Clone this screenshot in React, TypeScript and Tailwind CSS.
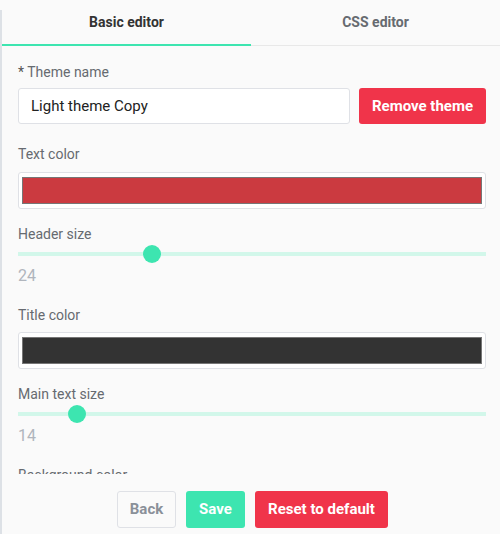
import React from "react";

const font = { fontFamily: "Roboto, 'Liberation Sans', sans-serif" };

function Label({ children, className = "" }: { children: React.ReactNode; className?: string }) {
  return <div className={"text-[14px] leading-[20px] text-[#666a70] " + className}>{children}</div>;
}

function ColorBox({ color, className = "" }: { color: string; className?: string }) {
  return (
    <div className={"h-[37px] rounded-[3px] border border-[#dfe1e6] bg-white pl-[3px] pr-[3px] pt-[4px] pb-[4px] " + className}>
      <div className="h-full border border-[#767676]" style={{ backgroundColor: color }} />
    </div>
  );
}

function Slider({ pos }: { pos: number }) {
  return (
    <div className="relative h-[20px] flex items-center">
      <div className="h-[4px] w-full bg-[#d2f7ea]" />
      <div
        className="absolute top-[1px] h-[18px] w-[18px] rounded-full bg-[#3de5b0]"
        style={{ left: pos - 9 }}
      />
    </div>
  );
}

export default function App() {
  return (
    <div className="w-[500px] h-[534px] bg-[#fafafa] flex overflow-hidden" style={font}>
      <div className="mt-[10px] w-[2px] bg-[#dde1e6] shrink-0" />
      <div className="flex-1 flex flex-col min-w-0">
        <div className="relative h-[46px] flex border-b border-[#e8e8e8] shrink-0">
          <div className="relative flex-1 flex items-center justify-center text-[14px] font-bold text-[#333]">
            Basic editor
            <div className="absolute left-0 right-0 bottom-[-1px] h-[2px] bg-[#3de5b0]" />
          </div>
          <div className="flex-1 flex items-center justify-center text-[14px] font-bold text-[#666a70]">
            CSS editor
          </div>
        </div>
        <div className="h-[428px] overflow-hidden pl-[16px] pr-[14px] shrink-0">
          <Label className="mt-[16px]">
            <span className="text-[#555]">*</span> Theme name
          </Label>
          <div className="mt-[6px] flex gap-[9px]">
            <div className="flex-1 h-[36px] rounded-[3px] border border-[#dfe1e6] bg-white flex items-center pl-[12px] text-[15px] text-[#222]">
              Light theme Copy
            </div>
            <button className="w-[127px] h-[36px] rounded-[3px] bg-[#f0344a] text-white font-bold text-[15px]">
              Remove theme
            </button>
          </div>
          <Label className="mt-[20px]">Text color</Label>
          <ColorBox color="#cb3a40" className="mt-[8px]" />
          <Label className="mt-[15px]">Header size</Label>
          <Slider pos={134} />
          <div className="text-[16px] leading-[24px] text-[#b0b5bd]">24</div>
          <Label className="mt-[17px]">Title color</Label>
          <ColorBox color="#333333" className="mt-[7px]" />
          <Label className="mt-[15px]">Main text size</Label>
          <Slider pos={59} />
          <div className="text-[16px] leading-[24px] text-[#b0b5bd]">14</div>
          <Label className="mt-[17px]">Background color</Label>
        </div>
        <div className="flex justify-center gap-[10px] pt-[17px] pl-[3px]">
          <button className="w-[59px] h-[37px] rounded-[3px] border border-[#dfe1e6] bg-[#fafafa] text-[#8a9099] font-bold text-[15px]">
            Back
          </button>
          <button className="w-[59px] h-[37px] rounded-[3px] bg-[#3de5b0] text-white font-bold text-[15px]">
            Save
          </button>
          <button className="w-[133px] h-[37px] rounded-[3px] bg-[#f0344a] text-white font-bold text-[15px]">
            Reset to default
          </button>
        </div>
      </div>
    </div>
  );
}
